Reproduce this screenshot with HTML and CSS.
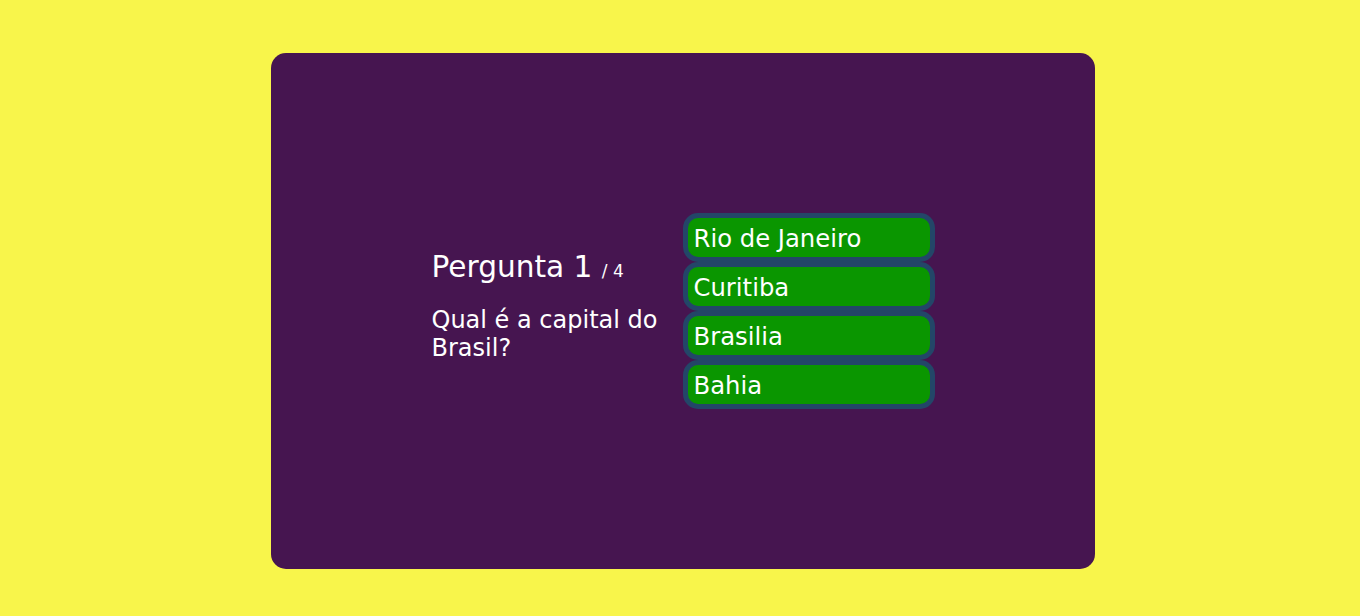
FILE: index.html
```html
<!DOCTYPE html>
<html lang="pt">
<head>
<meta charset="utf-8">
<title>Quiz</title>
<link rel="stylesheet" href="styles.css">
</head>
<body>
<div class="app">
  <div class="question-section">
    <div class="question-count"><span class="count-current">Pergunta 1 </span>/ 4</div>
    <div class="question-text">Qual é a capital do Brasil?</div>
  </div>
  <div class="answer-section">
    <button class="answer">Rio de Janeiro</button>
    <button class="answer">Curitiba</button>
    <button class="answer">Brasilia</button>
    <button class="answer">Bahia</button>
  </div>
</div>
</body>
</html>
```
FILE: styles.css
```css
html, body {
  margin: 0;
  padding: 0;
}
body {
  background-color: #f8f54b;
  font-family: "DejaVu Sans", Verdana, sans-serif;
  color: #ffffff;
  height: 616px;
  padding: 53px 265px 47px 271px;
  box-sizing: border-box;
}
.app {
  background-color: #461550;
  height: 516px;
  border-radius: 15px;
  display: flex;
  justify-content: center;
  align-items: center;
}
.question-section {
  width: 251px;
}
.question-count {
  font-size: 17px;
  margin-bottom: 22px;
}
.count-current {
  font-size: 29.6px;
}
.question-text {
  font-size: 24px;
  margin-bottom: 10px;
}
.answer-section {
  width: 252px;
  display: flex;
  flex-direction: column;
}
.answer {
  font-family: "DejaVu Sans", Verdana, sans-serif;
  font-size: 24.3px;
  line-height: 28px;
  color: #ffffff;
  background-color: #0a9600;
  border: 5px solid #234668;
  border-radius: 15px;
  padding: 7px 5px 4px 6px;
  margin: 0;
  height: 49px;
  text-align: left;
  cursor: pointer;
  box-sizing: border-box;
}
```
